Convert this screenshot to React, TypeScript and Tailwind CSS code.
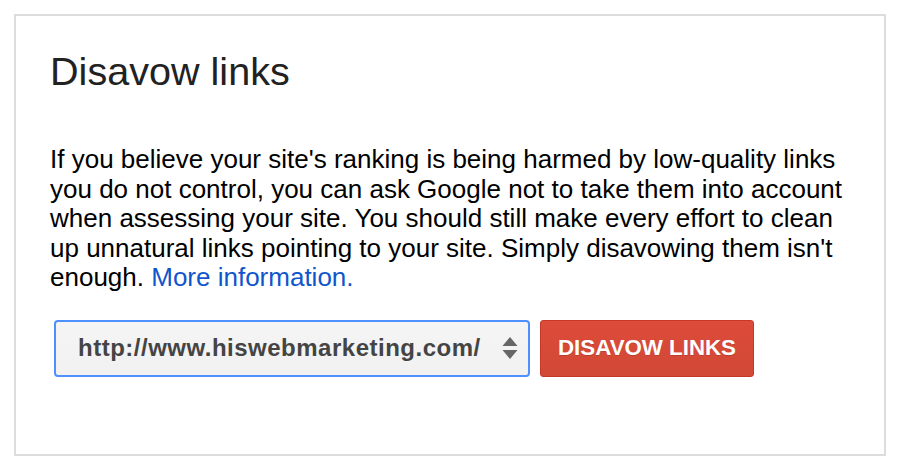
import React from "react";

const SiteSelect = ({ value }: { value: string }) => (
  <div className="ml-1 flex h-[57px] w-[476px] items-center justify-between rounded-[4px] border-2 border-[#4d90fe] bg-gradient-to-b from-[#f5f5f5] to-[#f1f1f1] pl-[22px] pr-[10px]">
    <span className="text-[24px] font-bold tracking-[0.5px] text-[#444]">{value}</span>
    <svg width="16" height="24" viewBox="0 0 16 24" className="text-[#666]">
      <polygon points="8,1 15.5,10 0.5,10" fill="currentColor" />
      <polygon points="8,23 15.5,14 0.5,14" fill="currentColor" />
    </svg>
  </div>
);

export default function App() {
  return (
    <div className="min-h-[472px] bg-white pl-[14px] pt-[14px] font-['Liberation_Sans',Arial,sans-serif]">
      <div className="h-[442px] w-[872px] border-2 border-[#dcdcdc] pl-[34px] pt-[33px]">
        <h1 className="text-[39.6px] font-normal leading-[45px] text-[#222]">Disavow links</h1>
        <p className="mt-[51px] w-[810px] text-[26px] leading-[29.5px] text-black">
          If you believe your site's ranking is being harmed by low-quality links you do not
          control, you can ask Google not to take them into account when assessing your site.
          You should still make every effort to clean up unnatural links pointing to your site.
          Simply disavowing them isn't enough. <a href="#" className="text-[#1155cc]">More information.</a>
        </p>
        <div className="mt-[27px] flex gap-[10px]">
          <SiteSelect value="http://www.hiswebmarketing.com/" />
          <button className="h-[57px] w-[214px] rounded-[3px] border border-[#c53727] bg-gradient-to-b from-[#dd4b39] to-[#d14836] text-[22.3px] font-bold text-white [text-shadow:0_1px_rgba(0,0,0,0.15)]">
            DISAVOW LINKS
          </button>
        </div>
      </div>
    </div>
  );
}
